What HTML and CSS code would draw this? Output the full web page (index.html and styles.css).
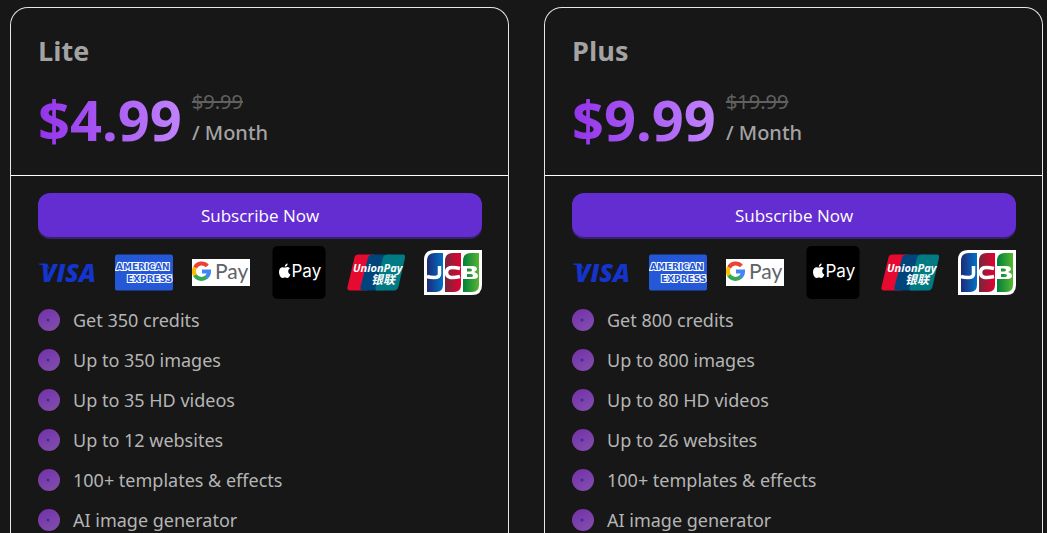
FILE: index.html
```html
<!DOCTYPE html>
<html lang="en">
<head>
    <meta charset="UTF-8">
    <meta name="viewport" content="width=device-width, initial-scale=1.0">
    <title>Pricing</title>
    <link rel="stylesheet" href="styles.css">
</head>
<body>
    <!-- shared payment logos -->
    <svg class="sprite" width="0" height="0" aria-hidden="true">
        <defs>
            <linearGradient id="jcbBlue"><stop offset="0" stop-color="#1f2a78"/><stop offset="1" stop-color="#0071c5"/></linearGradient>
            <linearGradient id="jcbRed"><stop offset="0" stop-color="#74283c"/><stop offset="1" stop-color="#e4002f"/></linearGradient>
            <linearGradient id="jcbGreen"><stop offset="0" stop-color="#00803d"/><stop offset="1" stop-color="#58b42f"/></linearGradient>
        </defs>
        <symbol id="visa" viewBox="0 0 58 36">
            <text class="visa-text" x="3" y="27">VISA</text>
            <path fill="#1434cb" d="M1 9h8l3 6C9 12 6 11 1 10z"/>
        </symbol>
        <symbol id="amex" viewBox="0 0 58 36">
            <rect width="58" height="36" rx="2" fill="#2458d6"/>
            <text class="amex-text" x="1" y="15">AMERICAN</text>
            <text class="amex-text" x="12" y="27">EXPRESS</text>
        </symbol>
        <symbol id="gpay" viewBox="0 0 58 27">
            <rect width="58" height="27" fill="#fff"/>
            <g fill="none" stroke-width="4">
                <path stroke="#ea4335" d="M3 8.500A7.500 7.500 0 0 1 15.300 7"/>
                <path stroke="#fbbc04" d="M3.200 16.500A7.500 7.500 0 0 1 3 8.500"/>
                <path stroke="#34a853" d="M14.500 18A7.500 7.500 0 0 1 3 16.200"/>
                <path stroke="#4285f4" d="M10 12.500h7A7.500 7.500 0 0 1 14.300 18.200"/>
            </g>
            <text class="gpay-text" x="23" y="20">Pay</text>
        </symbol>
        <symbol id="applepay" viewBox="0 0 53 53">
            <rect width="53" height="53" rx="5" fill="#000"/>
            <g fill="#fff">
                <path d="M12.500 21.500c1.400 0 2-.8 3.500-.3.700.2 1.200.6 1.500 1-2.600 1.700-2.200 5.100.4 6.200-.8 2-1.900 3.600-3 3.600-.9 0-1.200-.6-2.400-.6s-1.600.6-2.400.6C8 32 6.500 28.500 6.500 26c0-3 1.700-4.800 3.600-4.800 1 0 1.700.3 2.400.3z"/>
                <path d="M12.300 20.800c0-1.800 1.300-3 2.800-3.200.1 1.700-1.100 3.100-2.800 3.200z"/>
            </g>
            <text class="apple-text" x="19" y="31">Pay</text>
        </symbol>
        <symbol id="unionpay" viewBox="0 0 58 36">
            <path fill="#e60a30" d="M11 0h16l-7 36H3c-2 0-3-1-2.500-3.500L7.500 3Q8.300 0 11 0z"/>
            <path fill="#00447c" d="M26 0h18l-7 36H16c-2 0-3-1-2.500-3.500L21 3Q22 0 26 0z"/>
            <path fill="#007b84" d="M41 0h14c2.500 0 3.500 1 3 3.500L51.500 32Q50.500 36 47 36H31c-2 0-3-1-2.500-3.500L36 3Q37 0 41 0z"/>
            <text class="union-text" x="6" y="17">UnionPay</text>
            <text class="union-cn" x="24" y="29">银联</text>
        </symbol>
        <symbol id="jcb" viewBox="0 0 58 45">
            <path fill="#fff" d="M10 0h48v35q0 10-10 10H0V10Q0 0 10 0z"/>
            <path fill="url(#jcbBlue)" d="M11 3h8v32q0 7-7 7H3V11q0-8 8-8z"/>
            <path fill="url(#jcbRed)" d="M29 3h8v32q0 7-7 7h-9V11q0-8 8-8z"/>
            <path fill="url(#jcbGreen)" d="M47 3h8v32q0 7-7 7h-9V11q0-8 8-8z"/>
            <path fill="none" stroke="#fff" stroke-width="3.500" d="M15.500 16v8q0 3.500-5.500 3.500-4 0-7-1"/>
            <path fill="none" stroke="#fff" stroke-width="3.500" d="M36 18.500q-13.500-3.500-13.500 4T36 26.500"/>
            <path fill="#fff" fill-rule="evenodd" d="M39 16h9q5 0 5 3 0 2-3 3 4 1 4 4t-5 3H39zM43 18.500v3h3q2 0 2-1.500t-2-1.500zM43 24v3h4q2 0 2-1.500T47 24z"/>
        </symbol>
    </svg>

    <main class="plans">
        <section class="card">
            <header class="card-head">
                <h2 class="name">Lite</h2>
                <div class="price-row">
                    <span class="price">$4.99</span>
                    <div class="period">
                        <del>$9.99</del>
                        <span>/ Month</span>
                    </div>
                </div>
            </header>
            <div class="card-body">
                <button class="subscribe" type="button">Subscribe Now</button>
                <div class="payments">
                    <svg class="pay" role="img" aria-label="Visa"><use href="#visa"/></svg>
                    <svg class="pay" role="img" aria-label="American Express"><use href="#amex"/></svg>
                    <svg class="pay" role="img" aria-label="Google Pay"><use href="#gpay"/></svg>
                    <svg class="pay" role="img" aria-label="Apple Pay"><use href="#applepay"/></svg>
                    <svg class="pay" role="img" aria-label="UnionPay"><use href="#unionpay"/></svg>
                    <svg class="pay" role="img" aria-label="JCB"><use href="#jcb"/></svg>
                </div>
                <ul class="features">
                    <li>Get 350 credits</li>
                    <li>Up to 350 images</li>
                    <li>Up to 35 HD videos</li>
                    <li>Up to 12 websites</li>
                    <li>100+ templates &amp; effects</li>
                    <li>AI image generator</li>
                </ul>
            </div>
        </section>

        <section class="card">
            <header class="card-head">
                <h2 class="name">Plus</h2>
                <div class="price-row">
                    <span class="price">$9.99</span>
                    <div class="period">
                        <del>$19.99</del>
                        <span>/ Month</span>
                    </div>
                </div>
            </header>
            <div class="card-body">
                <button class="subscribe" type="button">Subscribe Now</button>
                <div class="payments">
                    <svg class="pay" role="img" aria-label="Visa"><use href="#visa"/></svg>
                    <svg class="pay" role="img" aria-label="American Express"><use href="#amex"/></svg>
                    <svg class="pay" role="img" aria-label="Google Pay"><use href="#gpay"/></svg>
                    <svg class="pay" role="img" aria-label="Apple Pay"><use href="#applepay"/></svg>
                    <svg class="pay" role="img" aria-label="UnionPay"><use href="#unionpay"/></svg>
                    <svg class="pay" role="img" aria-label="JCB"><use href="#jcb"/></svg>
                </div>
                <ul class="features">
                    <li>Get 800 credits</li>
                    <li>Up to 800 images</li>
                    <li>Up to 80 HD videos</li>
                    <li>Up to 26 websites</li>
                    <li>100+ templates &amp; effects</li>
                    <li>AI image generator</li>
                </ul>
            </div>
        </section>
    </main>
</body>
</html>
```

FILE: styles.css
```css
*{
    margin: 0;
    padding: 0;
    box-sizing: border-box;
}
html{
    scrollbar-width: none;
}
body{
    background: #171717;
    color: #b5b5b5;
    font-family: "Noto Sans", "Open Sans", sans-serif;
    font-size: 18px;
}
.sprite{
    position: absolute;
}
.plans{
    display: grid;
    grid-template-columns: 1fr 1fr;
    gap: 35px;
    padding: 7px 4px 0 10px;
}
.card{
    border: 1px solid #e5e7eb;
    border-bottom: 0;
    border-radius: 18px 18px 0 0;
}
.card-head{
    padding: 23px 26px 20px 27px;
    border-bottom: 1px solid #fff;
}
.name{
    font-family: "Open Sans", sans-serif;
    font-size: 27px;
    line-height: 40px;
    font-weight: 700;
    color: #a3a3a3;
}
.price-row{
    display: flex;
    align-items: center;
    gap: 10px;
    margin-top: 10px;
}
.price{
    padding-top: 2px;
    font-size: 56px;
    line-height: 72px;
    font-weight: 700;
    background: linear-gradient(to right, #9333ea, #c084fc);
    -webkit-background-clip: text;
    background-clip: text;
    color: transparent;
}
.period{
    display: flex;
    flex-direction: column;
    padding-bottom: 2px;
    font-size: 20px;
    line-height: 31px;
    font-weight: 500;
    color: #a3a3a3;
}
.period del{
    color: #606060;
    font-weight: 400;
}
.card-body{
    padding: 17px 26px 0 27px;
}
.subscribe{
    display: block;
    width: 100%;
    height: 44px;
    border: 0;
    border-radius: 12px;
    background: #642dd2;
    box-shadow: 0 2px 0 #38216a;
    color: #fff;
    font-family: "Open Sans", sans-serif;
    font-size: 17px;
    cursor: pointer;
}
.payments{
    display: flex;
    justify-content: space-between;
    margin-top: 9px;
}
.pay{
    width: 58px;
    height: 53px;
}
.features{
    list-style: none;
    margin-top: 1px;
}
.features li{
    display: flex;
    align-items: center;
    gap: 13px;
    height: 40px;
}
.features li::before{
    content: "";
    width: 22px;
    height: 22px;
    border-radius: 50%;
    background:
        radial-gradient(circle at 10px 11px, #3730a3 1px, transparent 2px),
        linear-gradient(150deg, #7330a8, #8350ad);
}

/* logo lettering */
.visa-text{
    font: italic 800 25px "Open Sans", sans-serif;
    fill: #1434cb;
}
.amex-text{
    font: 700 9px "DejaVu Sans", sans-serif;
    fill: #2458d6;
    stroke: #fff;
    stroke-width: 2px;
    paint-order: stroke;
}
.gpay-text{
    font: 400 21px Lato, sans-serif;
    fill: #5f6368;
}
.apple-text{
    font: 400 17px Inter, sans-serif;
    fill: #fff;
}
.union-text{
    font: italic 700 11px "Open Sans", sans-serif;
    fill: #fff;
}
.union-cn{
    font: italic 700 12px "Noto Sans CJK SC", sans-serif;
    fill: #fff;
}
```
